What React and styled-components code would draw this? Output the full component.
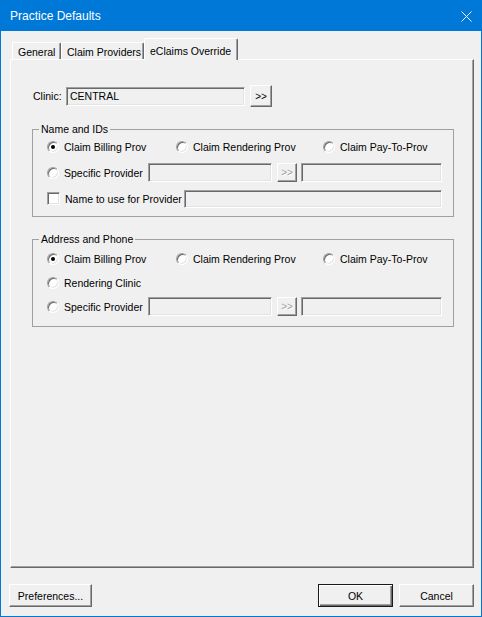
import React from 'react'
import styled, { createGlobalStyle } from 'styled-components'

const GlobalStyle = createGlobalStyle`
  html, body { margin:0; padding:0; background:#fff; }
  body {
    font-family: "Liberation Sans", Arial, sans-serif;
    font-size:10.5px;
    color:#000;
  }
  * { box-sizing:border-box; }
`

export default function App() {
  return (
    <>
      <GlobalStyle />
      <Window>
        <TitleBar>
          <Title>Practice Defaults</Title>
          <CloseBtn width="11" height="11" viewBox="0 0 11 11">
            <path d="M0.5 0.5 L10.5 10.5 M10.5 0.5 L0.5 10.5" stroke="#fff" strokeWidth="1" />
          </CloseBtn>
        </TitleBar>
        <Client>
          <TabRow>
            <Tab w={49}>General</Tab>
            <Tab w={83}>Claim Providers</Tab>
            <Tab w={94} active>eClaims Override</Tab>
          </TabRow>
          <Panel>
            <ClinicRow>
              <FieldLabel>Clinic:</FieldLabel>
              <TextBox w={179}>CENTRAL</TextBox>
              <SmallButton w={22} h={22} gap={5}>&gt;&gt;</SmallButton>
            </ClinicRow>

            <GroupBox pt={1} pb={8} rowGap={7}>
              <Legend>Name and IDs</Legend>
              <Row>
                <Option w={129}><Radio checked /><span>Claim Billing Prov</span></Option>
                <Option w={147}><Radio /><span>Claim Rendering Prov</span></Option>
                <Option><Radio /><span>Claim Pay-To-Prov</span></Option>
              </Row>
              <Row>
                <Option w={101}><Radio /><span>Specific Provider</span></Option>
                <TextBox w={124} />
                <SmallButton w={20} h={19} gap={5} disabled>&gt;&gt;</SmallButton>
                <TextBox w={141} gap={4} />
              </Row>
              <Row>
                <Option w={137}><Check /><span>Name to use for Provider</span></Option>
                <TextBox w={258} h={18} />
              </Row>
            </GroupBox>

            <GroupBox pt={3} pb={10} rowGap={5}>
              <Legend>Address and Phone</Legend>
              <Row>
                <Option w={129}><Radio checked /><span>Claim Billing Prov</span></Option>
                <Option w={147}><Radio /><span>Claim Rendering Prov</span></Option>
                <Option><Radio /><span>Claim Pay-To-Prov</span></Option>
              </Row>
              <Row>
                <Option><Radio /><span>Rendering Clinic</span></Option>
              </Row>
              <Row>
                <Option w={101}><Radio /><span>Specific Provider</span></Option>
                <TextBox w={124} />
                <SmallButton w={20} h={19} gap={5} disabled>&gt;&gt;</SmallButton>
                <TextBox w={141} gap={4} />
              </Row>
            </GroupBox>
          </Panel>
          <Footer>
            <PushButton w={83}>Preferences...</PushButton>
            <PushButton w={75} primary>OK</PushButton>
            <PushButton w={75}>Cancel</PushButton>
          </Footer>
        </Client>
      </Window>
    </>
  )
}

const Window = styled.div`
  width:482px;
  height:617px;
  background:#0078d7;
  padding:0 1px 1px 1px;
  display:flex;
  flex-direction:column;
`

const TitleBar = styled.div`
  height:31px;
  display:flex;
  align-items:center;
  padding:0 9px 0 9px;
  color:#fff;
`

const Title = styled.div`
  font-family:"Liberation Sans", Arial, sans-serif;
  font-size:12px;
  padding-top:1px;
`

const CloseBtn = styled.svg`
  margin-left:auto;
  margin-top:1px;
`

const Client = styled.div`
  flex:1;
  background:#f0f0f0;
  display:flex;
  flex-direction:column;
`

const TabRow = styled.div`
  display:flex;
  align-items:flex-end;
  height:21px;
  margin:7px 0 0 11px;
  position:relative;
  z-index:1;
`

const Tab = styled.div`
  width:${p => p.w}px;
  height:${p => (p.active ? 22 : 17)}px;
  margin-bottom:${p => (p.active ? -1 : 0)}px;
  background:#f0f0f0;
  border-top:1px solid #fff;
  border-left:1px solid #fff;
  border-right:1px solid #696969;
  box-shadow:inset -1px 0 0 #a0a0a0;
  border-radius:2px 2px 0 0;
  padding:${p => (p.active ? '2px 0 0 5px' : '1px 0 0 5px')};
  display:flex;
  align-items:center;
  white-space:nowrap;
`

const Panel = styled.div`
  width:464px;
  height:509px;
  margin-left:9px;
  border:1px solid;
  border-color:#fff #696969 #696969 #fff;
  box-shadow:inset -1px -1px 0 #a0a0a0;
  display:flex;
  flex-direction:column;
`

const ClinicRow = styled.div`
  display:flex;
  align-items:center;
  height:22px;
  margin:25px 0 0 22px;
`

const FieldLabel = styled.span`
  width:33px;
`

const TextBox = styled.div`
  width:${p => p.w}px;
  height:${p => p.h || 19}px;
  margin-left:${p => p.gap || 0}px;
  background:#f0f0f0;
  border:1px solid;
  border-color:#a0a0a0 #fff #fff #a0a0a0;
  box-shadow:inset 1px 1px 0 #696969, inset -1px -1px 0 #e3e3e3;
  padding:0 0 0 3px;
  display:flex;
  align-items:center;
  white-space:nowrap;
`

const SmallButton = styled.div`
  width:${p => p.w}px;
  height:${p => p.h}px;
  margin-left:${p => p.gap}px;
  border:1px solid;
  border-color:#fff #696969 #696969 #fff;
  box-shadow:inset -1px -1px 0 #a0a0a0;
  display:flex;
  align-items:center;
  justify-content:center;
  font-size:10px;
  color:${p => (p.disabled ? '#a0a0a0' : '#000')};
  text-shadow:${p => (p.disabled ? '1px 1px 0 #fff' : 'none')};
`

const GroupBox = styled.fieldset`
  width:422px;
  margin:16px 0 0 21px;
  min-width:0;
  border:1px solid #a0a0a0;
  padding:${p => p.pt}px 0 ${p => p.pb}px 6px;
  display:flex;
  flex-direction:column;
  gap:${p => p.rowGap}px;
`

const Legend = styled.legend`
  padding:0 2px;
  line-height:13px;
  height:13px;
`

const Row = styled.div`
  display:flex;
  align-items:center;
  height:19px;
  padding-left:8px;
`

const Option = styled.label`
  display:flex;
  align-items:center;
  gap:5px;
  width:${p => (p.w ? `${p.w}px` : 'auto')};
  flex-shrink:0;
  white-space:nowrap;
`

const RadioCircle = styled.span`
  width:12px;
  height:12px;
  border-radius:50%;
  background:#fff;
  border:1px solid;
  border-color:#a0a0a0 #fff #fff #a0a0a0;
  box-shadow:inset 1px 1px 0 #696969, inset -1px -1px 0 #e3e3e3;
  display:flex;
  align-items:center;
  justify-content:center;
  flex-shrink:0;
`

const Dot = styled.span`
  width:4px;
  height:4px;
  border-radius:50%;
  background:#000;
`

function Radio({ checked }) {
  return <RadioCircle>{checked && <Dot />}</RadioCircle>
}

const Check = styled.span`
  width:13px;
  height:13px;
  background:#fff;
  border:1px solid;
  border-color:#a0a0a0 #fff #fff #a0a0a0;
  box-shadow:inset 1px 1px 0 #696969, inset -1px -1px 0 #e3e3e3;
  flex-shrink:0;
`

const Footer = styled.div`
  display:flex;
  gap:6px;
  margin-top:16px;
  padding:0 7px 0 8px;
`

const PushButton = styled.div`
  width:${p => p.w}px;
  height:23px;
  margin-left:${p => (p.primary ? 'auto' : '0')};
  border:1px solid;
  border-color:${p => (p.primary ? '#1a1a1a' : '#fff #696969 #696969 #fff')};
  box-shadow:${p =>
    p.primary
      ? 'inset 1px 1px 0 #fff, inset -1px -1px 0 #696969, inset -2px -2px 0 #a0a0a0'
      : 'inset -1px -1px 0 #a0a0a0'};
  display:flex;
  align-items:center;
  justify-content:center;
`
